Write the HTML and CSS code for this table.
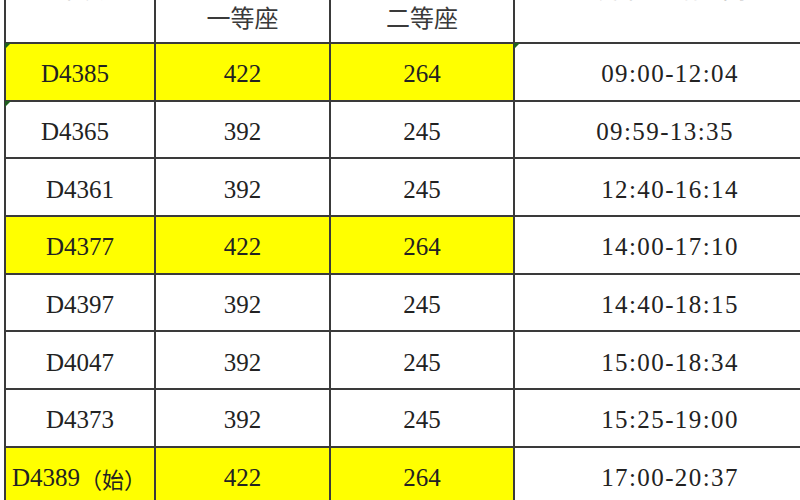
FILE: index.html
```html
<!DOCTYPE html>
<html lang="zh-CN">
<head>
<meta charset="utf-8">
<title>车次票价表</title>
<link rel="stylesheet" href="styles.css">
</head>
<body>
<div class="sheet">
  <div class="cell head head-top span-rows">车次</div>
  <div class="cell head head-group"></div>
  <div class="cell head head-top span-rows">发车-到站时间</div>
  <div class="cell head head-sub">一等座</div>
  <div class="cell head head-sub">二等座</div>

  <div class="cell hl flag shift">D4385</div>
  <div class="cell hl">422</div>
  <div class="cell hl">264</div>
  <div class="cell time flag">09:00-12:04</div>

  <div class="cell flag shift">D4365</div>
  <div class="cell">392</div>
  <div class="cell">245</div>
  <div class="cell time shift">09:59-13:35</div>

  <div class="cell">D4361</div>
  <div class="cell">392</div>
  <div class="cell">245</div>
  <div class="cell time">12:40-16:14</div>

  <div class="cell hl">D4377</div>
  <div class="cell hl">422</div>
  <div class="cell hl">264</div>
  <div class="cell time">14:00-17:10</div>

  <div class="cell">D4397</div>
  <div class="cell">392</div>
  <div class="cell">245</div>
  <div class="cell time">14:40-18:15</div>

  <div class="cell">D4047</div>
  <div class="cell">392</div>
  <div class="cell">245</div>
  <div class="cell time">15:00-18:34</div>

  <div class="cell">D4373</div>
  <div class="cell">392</div>
  <div class="cell">245</div>
  <div class="cell time">15:25-19:00</div>

  <div class="cell hl left">D4389<span class="cjk">（始）</span></div>
  <div class="cell hl">422</div>
  <div class="cell hl">264</div>
  <div class="cell time">17:00-20:37</div>
</div>
</body>
</html>
```

FILE: styles.css
```css
html, body {
  margin: 0;
  padding: 0;
  overflow: hidden;
  background: #ffffff;
}

body {
  width: 800px;
  height: 500px;
  font-family: "Liberation Serif", "Noto Sans CJK SC", serif;
  color: #222222;
}

.sheet {
  display: grid;
  grid-template-columns: 148px 173px 182px 310px;
  grid-template-rows: 26px 42px;
  grid-auto-rows: 55.7px;
  gap: 2px;
  padding: 2px;
  background: #3a3a3a;
  width: max-content;
  margin: -30px 0 0 4px;
}

.cell {
  background: #ffffff;
  display: flex;
  align-items: center;
  justify-content: center;
  padding-top: 5px;
  box-sizing: border-box;
  font-size: 25px;
  white-space: nowrap;
  position: relative;
}

.hl {
  background: #ffff00;
}

.time {
  letter-spacing: 1.4px;
}

.shift {
  padding-right: 10px;
}

.left {
  justify-content: flex-start;
  padding-left: 6px;
}

.cjk {
  font-family: "Noto Sans CJK SC", sans-serif;
  font-size: 22px;
}

.head {
  font-family: "Noto Sans CJK SC", sans-serif;
  font-size: 24px;
  line-height: 26px;
  padding-top: 0;
}

.span-rows {
  grid-row: span 2;
}

.head-group {
  grid-column: span 2;
}

.head-top {
  align-items: flex-start;
  padding-top: 3px;
  color: #c4c4c4;
}

.head-sub {
  padding-bottom: 8px;
  color: #3a3a3a;
}

.flag::before {
  content: "";
  position: absolute;
  top: -1px;
  left: -1px;
  width: 0;
  height: 0;
  border-top: 6px solid #1f5f1f;
  border-right: 6px solid transparent;
}
```
